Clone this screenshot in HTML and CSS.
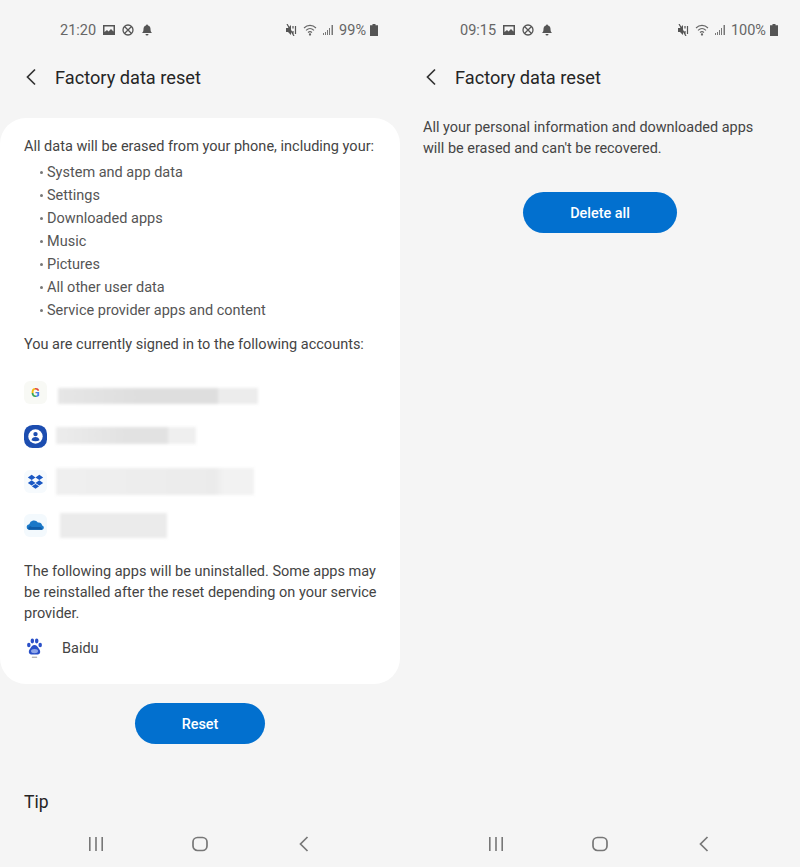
FILE: index.html
```html
<!DOCTYPE html>
<html lang="en">
  <head>
    <meta charset="UTF-8" />
    <meta name="viewport" content="width=device-width, initial-scale=1.0" />
    <title>Factory data reset</title>
    <link rel="stylesheet" href="styles.css">
  </head>
  <body>
    <div class="screens">
      <!-- Left phone -->
      <section class="phone">
        <div class="status-bar">
          <div class="status-left">
            <span class="time">21:20</span>
            <svg class="st-icon" viewBox="0 0 12 12"><path d="M0 1h12v10H0z" fill="#555"/><path d="M1.500 2.500h9v5L8 5 5.500 7.500 4 6 1.500 8z" fill="#f5f5f5"/></svg>
            <svg class="st-icon" viewBox="0 0 12 12" fill="none" stroke="#555" stroke-width="1.300"><circle cx="6" cy="6" r="5"/><path d="M2.500 2.500l7 7M9.500 2.500l-7 7"/></svg>
            <svg class="st-icon" viewBox="0 0 12 12"><path d="M6 0.500a1 1 0 0 1 1 1c2 .5 2.500 2 2.500 3.500 0 2 .5 3 1.500 4H1c1-1 1.500-2 1.500-4C2.500 3.500 3 2 5 1.500a1 1 0 0 1 1-1zM4.500 10h3a1.500 1.500 0 0 1-3 0z" fill="#555"/></svg>
          </div>
          <div class="status-right">
            <svg class="st-mute" viewBox="0 0 11 12"><path d="M0 4h2L5 1v10L2 8H0z" fill="#555"/><path d="M1 0l7 12M7 2v2.500M7 7v3M9.500 2v8" stroke="#555" stroke-width="1.200"/></svg>
            <svg class="st-wifi" viewBox="0 0 14 12" fill="none" stroke="#666" stroke-width="1.100"><path d="M1 4c3.500-3.500 8.500-3.500 12 0M3 6.300c2.500-2.300 5.500-2.300 8 0M5 8.500c1.200-1 2.800-1 4 0"/><circle cx="7" cy="10.500" r=".6"/></svg>
            <svg class="st-signal" viewBox="0 0 11 12"><path d="M0 9h1v2H0zM2 8h1v3H2zM4 6h1v5H4zM6 4h1v7H6zM8.500 1H10v10H8.500z" fill="#777"/></svg>
            <span class="battery-text">99%</span>
            <svg class="st-battery" viewBox="0 0 8 12"><path d="M2.500 0h3v1.200H8V12H0V1.200h2.500z" fill="#555"/></svg>
          </div>
        </div>

        <header class="title-bar">
          <svg class="back" viewBox="0 0 12 18" fill="none" stroke="#333" stroke-width="1.700"><path d="M10 1.500L2.500 9l7.500 7.500"/></svg>
          <h1>Factory data reset</h1>
        </header>

        <div class="card">
          <p>All data will be erased from your phone, including your:</p>
          <ul class="erase-list">
            <li>System and app data</li>
            <li>Settings</li>
            <li>Downloaded apps</li>
            <li>Music</li>
            <li>Pictures</li>
            <li>All other user data</li>
            <li>Service provider apps and content</li>
          </ul>
          <p class="signed-in">You are currently signed in to the following accounts:</p>

          <div class="accounts">
            <div class="account">
              <span class="acc-icon google"><span class="google-g">G</span></span>
              <span class="blur-bar bar-google"></span>
            </div>
            <div class="account">
              <svg class="acc-icon" viewBox="0 0 24 24"><rect width="24" height="24" rx="9" fill="#1c4db0"/><circle cx="12" cy="12" r="7.500" fill="#fff"/><circle cx="12" cy="9.500" r="2.300" fill="#1c4db0"/><path d="M7.800 16c.5-2.500 2-3.500 4.200-3.500s3.700 1 4.200 3.500c-2.500 1.400-5.900 1.400-8.400 0z" fill="#1c4db0"/></svg>
              <span class="blur-bar bar-samsung"></span>
            </div>
            <div class="account">
              <svg class="acc-icon" viewBox="0 0 24 24"><rect width="24" height="24" rx="6" fill="#f6fafd"/><path d="M8 5l4 2.700-4 2.700-4-2.700zM16 5l4 2.700-4 2.700-4-2.700zM8 10.800l4 2.700-4 2.700-4-2.700zM16 10.800l4 2.700-4 2.700-4-2.700zM12 14.500l3.800 2.500L12 19.500 8.200 17z" fill="#1a58c4"/></svg>
              <span class="blur-bar bar-dropbox"></span>
            </div>
            <div class="account">
              <svg class="acc-icon" viewBox="0 0 24 24"><rect width="24" height="24" rx="6" fill="#f3f9fd"/><path d="M5 16.500a3 3 0 0 1 .500-5.900 5 5 0 0 1 9-1.700 4 4 0 0 1 4.500 3 2.400 2.400 0 0 1 0 4.600z" fill="#1a78c8"/><path d="M5 16.500a2 2 0 0 1 3-3h9a3 3 0 0 1 2 3z" fill="#0e5ca8"/></svg>
              <span class="blur-bar bar-onedrive"></span>
            </div>
          </div>

          <p class="uninstall">The following apps will be uninstalled. Some apps may be reinstalled after the reset depending on your service provider.</p>
          <div class="app-row">
            <svg class="app-icon" viewBox="0 0 24 24" fill="#2a50c8"><ellipse cx="5.500" cy="8.500" rx="2" ry="2.500"/><ellipse cx="9.500" cy="4" rx="2" ry="2.800"/><ellipse cx="14.500" cy="4" rx="2" ry="2.800"/><ellipse cx="18.500" cy="8.500" rx="2" ry="2.500"/><path d="M12 8.500c2.500 0 3.500 2 4.500 3.500s2 2.500 2 4.500-2 3-4 3h-5c-2 0-4-1-4-3s1-3 2-4.500 2-3.500 4.500-3.500z"/><ellipse cx="12" cy="15.500" rx="4" ry="2.500" fill="#8fa6e8"/><path d="M9 22h6v1H9z" fill="#888"/></svg>
            <span>Baidu</span>
          </div>
        </div>

        <div class="action action-reset">
          <button class="pill pill-reset">Reset</button>
        </div>
        <h2 class="tip">Tip</h2>

        <nav class="nav-bar">
          <svg class="nav-icon" viewBox="0 0 20 20" fill="#777"><path d="M3 3h1.600v14H3zM9.200 3h1.600v14H9.200zM15.400 3H17v14h-1.600z"/></svg>
          <svg class="nav-icon" viewBox="0 0 20 20" fill="none" stroke="#777" stroke-width="1.700"><rect x="3" y="3.500" width="14" height="13" rx="4.500"/></svg>
          <svg class="nav-icon" viewBox="0 0 20 20" fill="none" stroke="#777" stroke-width="1.700"><path d="M13.500 3L6.500 10l7 7"/></svg>
        </nav>
      </section>

      <!-- Right phone -->
      <section class="phone">
        <div class="status-bar">
          <div class="status-left">
            <span class="time">09:15</span>
            <svg class="st-icon" viewBox="0 0 12 12"><path d="M0 1h12v10H0z" fill="#555"/><path d="M1.500 2.500h9v5L8 5 5.500 7.500 4 6 1.500 8z" fill="#f5f5f5"/></svg>
            <svg class="st-icon" viewBox="0 0 12 12" fill="none" stroke="#555" stroke-width="1.300"><circle cx="6" cy="6" r="5"/><path d="M2.500 2.500l7 7M9.500 2.500l-7 7"/></svg>
            <svg class="st-icon" viewBox="0 0 12 12"><path d="M6 0.500a1 1 0 0 1 1 1c2 .5 2.500 2 2.500 3.500 0 2 .5 3 1.500 4H1c1-1 1.500-2 1.500-4C2.500 3.500 3 2 5 1.500a1 1 0 0 1 1-1zM4.500 10h3a1.500 1.500 0 0 1-3 0z" fill="#555"/></svg>
          </div>
          <div class="status-right">
            <svg class="st-mute" viewBox="0 0 11 12"><path d="M0 4h2L5 1v10L2 8H0z" fill="#555"/><path d="M1 0l7 12M7 2v2.500M7 7v3M9.500 2v8" stroke="#555" stroke-width="1.200"/></svg>
            <svg class="st-wifi" viewBox="0 0 14 12" fill="none" stroke="#666" stroke-width="1.100"><path d="M1 4c3.500-3.500 8.500-3.500 12 0M3 6.300c2.500-2.300 5.500-2.300 8 0M5 8.500c1.200-1 2.800-1 4 0"/><circle cx="7" cy="10.500" r=".6"/></svg>
            <svg class="st-signal" viewBox="0 0 11 12"><path d="M0 9h1v2H0zM2 8h1v3H2zM4 6h1v5H4zM6 4h1v7H6zM8.500 1H10v10H8.500z" fill="#777"/></svg>
            <span class="battery-text">100%</span>
            <svg class="st-battery" viewBox="0 0 8 12"><path d="M2.500 0h3v1.200H8V12H0V1.200h2.500z" fill="#555"/></svg>
          </div>
        </div>

        <header class="title-bar">
          <svg class="back" viewBox="0 0 12 18" fill="none" stroke="#333" stroke-width="1.700"><path d="M10 1.500L2.500 9l7.500 7.500"/></svg>
          <h1>Factory data reset</h1>
        </header>

        <p class="confirm-text">All your personal information and downloaded apps will be erased and can't be recovered.</p>
        <div class="action action-delete">
          <button class="pill pill-delete">Delete all</button>
        </div>

        <nav class="nav-bar">
          <svg class="nav-icon" viewBox="0 0 20 20" fill="#777"><path d="M3 3h1.600v14H3zM9.200 3h1.600v14H9.200zM15.400 3H17v14h-1.600z"/></svg>
          <svg class="nav-icon" viewBox="0 0 20 20" fill="none" stroke="#777" stroke-width="1.700"><rect x="3" y="3.500" width="14" height="13" rx="4.500"/></svg>
          <svg class="nav-icon" viewBox="0 0 20 20" fill="none" stroke="#777" stroke-width="1.700"><path d="M13.500 3L6.500 10l7 7"/></svg>
        </nav>
      </section>
    </div>
  </body>
</html>
```
FILE: styles.css
```css
* {
  margin: 0;
  padding: 0;
  box-sizing: border-box;
}

html,
body {
  height: 867px;
  overflow: hidden;
}

body {
  font-family: Roboto, "Liberation Sans", sans-serif;
  background-color: #f5f5f5;
  color: #444;
}

.screens {
  display: grid;
  grid-template-columns: 400px 400px;
  height: 867px;
}

.phone {
  display: flex;
  flex-direction: column;
  height: 867px;
}

.status-bar {
  display: flex;
  justify-content: space-between;
  align-items: center;
  height: 20px;
  margin-top: 20px;
  padding: 0 22px 0 60px;
  font-size: 14.500px;
  color: #666;
}

.status-left {
  display: flex;
  align-items: center;
  gap: 7px;
}

.status-right {
  display: flex;
  align-items: center;
  gap: 6px;
}

.st-icon {
  width: 12px;
  height: 12px;
}

.st-mute,
.st-signal {
  width: 11px;
  height: 12px;
}

.st-wifi {
  width: 14px;
  height: 12px;
}

.st-battery {
  width: 8px;
  height: 12px;
  margin-left: -2px;
}

.battery-text {
  margin-left: -1px;
}

.title-bar {
  display: flex;
  align-items: center;
  height: 40px;
  margin-top: 17px;
  padding-left: 25px;
}

.back {
  width: 12px;
  height: 18px;
}

.title-bar h1 {
  margin-left: 18px;
  font-size: 18.200px;
  font-weight: 400;
  color: #252525;
}

.card {
  height: 566px;
  margin-top: 21px;
  padding: 18px 20px 0 24px;
  background-color: #fff;
  border-radius: 26px;
  font-size: 14.500px;
  line-height: 21px;
}

.erase-list {
  margin-top: 4px;
  padding-left: 23px;
  list-style: none;
  color: #555;
}

.erase-list li {
  position: relative;
  height: 23px;
  line-height: 23px;
}

.erase-list li::before {
  content: "";
  position: absolute;
  left: -7px;
  top: 10px;
  width: 3px;
  height: 3px;
  border-radius: 50%;
  background-color: #777;
}

.signed-in {
  margin-top: 12px;
}

.accounts {
  margin-top: 15px;
}

.account {
  display: flex;
  align-items: center;
  gap: 9px;
  height: 44.500px;
}

.acc-icon {
  flex: none;
  width: 23px;
  height: 23px;
}

.google {
  display: flex;
  align-items: center;
  justify-content: center;
  background-color: #f8f9f5;
  border-radius: 6px;
}

.google-g {
  font-size: 13px;
  font-weight: 700;
  color: transparent;
  background: conic-gradient(#e0483c 0 25%, #4a82e8 25% 50%, #3aa757 50% 75%, #f2b90f 75%);
  -webkit-background-clip: text;
  background-clip: text;
}

.blur-bar {
  display: block;
  background-color: #e6e6e6;
  filter: blur(1.500px);
}

.bar-google {
  width: 200px;
  height: 16px;
  margin: 8px 0 0 2px;
  background: linear-gradient(90deg, #e6e6e6 0, #dedede 40%, #dedede 80%, #ececec 80%);
}

.bar-samsung {
  width: 140px;
  height: 17px;
  margin-bottom: 2px;
  background: linear-gradient(90deg, #ececec 0, #e2e2e2 50%, #e2e2e2 80%, #efefef 80%);
}

.bar-dropbox {
  width: 198px;
  height: 27px;
  background: linear-gradient(90deg, #efefef 0, #ebebeb 80%, #f2f2f2 85%);
}

.bar-onedrive {
  width: 107px;
  height: 25px;
  margin-left: 4px;
  background-color: #ebebeb;
}

.uninstall {
  margin-top: 13px;
}

.app-row {
  display: flex;
  align-items: center;
  gap: 17px;
  height: 24px;
  margin-top: 12px;
}

.app-icon {
  width: 21px;
  height: 24px;
}

.action {
  display: flex;
  justify-content: center;
}

.action-reset {
  margin-top: 19px;
}

.action-delete {
  margin-top: 33px;
}

.pill {
  height: 41px;
  padding-top: 1px;
  border: none;
  border-radius: 21px;
  background-color: #0270cf;
  color: #fff;
  font-family: inherit;
  font-size: 14.400px;
  font-weight: 500;
}

.pill-reset {
  width: 130px;
}

.pill-delete {
  width: 154px;
}

.tip {
  margin-top: 46px;
  padding-left: 24px;
  font-size: 17.500px;
  line-height: 24px;
  font-weight: 400;
  color: #252525;
}

.confirm-text {
  margin-top: 20px;
  padding: 0 24px 0 23px;
  font-size: 14.450px;
  line-height: 21px;
}

.nav-bar {
  display: flex;
  justify-content: space-between;
  margin-top: auto;
  margin-bottom: 13px;
  padding: 0 86px;
}

.nav-icon {
  width: 20px;
  height: 20px;
}
```
